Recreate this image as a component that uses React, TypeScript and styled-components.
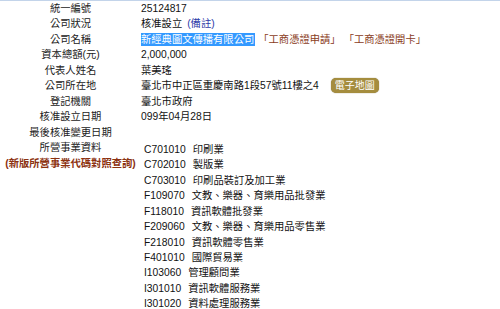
import React from "react";
import styled, { createGlobalStyle } from "styled-components";

const business = [
  ["C701010", "印刷業"],
  ["C702010", "製版業"],
  ["C703010", "印刷品裝訂及加工業"],
  ["F109070", "文教、樂器、育樂用品批發業"],
  ["F118010", "資訊軟體批發業"],
  ["F209060", "文教、樂器、育樂用品零售業"],
  ["F218010", "資訊軟體零售業"],
  ["F401010", "國際貿易業"],
  ["I103060", "管理顧問業"],
  ["I301010", "資訊軟體服務業"],
  ["I301020", "資料處理服務業"],
];

const App = () => {
  return (
    <>
      <GlobalStyle />
      <Page>
        <Row>
          <Label>統一編號</Label>
          <Value>25124817</Value>
        </Row>
        <Row>
          <Label>公司狀況</Label>
          <Value>
            核准設立 <Note>(備註)</Note>
          </Value>
        </Row>
        <Row>
          <Label>公司名稱</Label>
          <Value>
            <Selected>新經典圖文傳播有限公司</Selected>
            <CertLink>「工商憑證申請」</CertLink>
            <CertLink>「工商憑證開卡」</CertLink>
          </Value>
        </Row>
        <Row>
          <Label>資本總額(元)</Label>
          <Value>2,000,000</Value>
        </Row>
        <Row>
          <Label>代表人姓名</Label>
          <Value>葉美瑤</Value>
        </Row>
        <Row>
          <Label>公司所在地</Label>
          <Value>
            臺北市中正區重慶南路1段57號11樓之4
            <MapButton>電子地圖</MapButton>
          </Value>
        </Row>
        <Row>
          <Label>登記機關</Label>
          <Value>臺北市政府</Value>
        </Row>
        <Row>
          <Label>核准設立日期</Label>
          <Value>099年04月28日</Value>
        </Row>
        <Row>
          <Label>最後核准變更日期</Label>
          <Value />
        </Row>
        <Row>
          <Label>
            所營事業資料
            <br />
            <LookupLink>(新版所營事業代碼對照查詢)</LookupLink>
          </Label>
          <BusinessList>
            {business.map(([code, name]) => (
              <BusinessItem key={code}>
                <Code>{code}</Code>
                {name}
              </BusinessItem>
            ))}
          </BusinessList>
        </Row>
      </Page>
    </>
  );
};

/**
 * styles
 */

const GlobalStyle = createGlobalStyle`
  body {
    margin: 0;
    background: #fff;
    font-family: "Liberation Sans", "Noto Sans CJK TC", Arial, sans-serif;
    font-size: 10.3px;
    color: #111;
  }
`;

const Page = styled.div`
  width: 500px;
  height: 309px;
  overflow: hidden;
  border-top: 1px solid #c3d4ea;
`;

const Row = styled.div`
  display: grid;
  grid-template-columns: 141px 1fr;
  align-items: start;
`;

const Label = styled.div`
  text-align: center;
  line-height: 15.45px;
  color: #222;
  white-space: nowrap;
`;

const Value = styled.div`
  display: flex;
  align-items: center;
  height: 15.45px;
  line-height: 15.45px;
  white-space: nowrap;
`;

const Note = styled.span`
  color: #2c3aa8;
  margin-left: 5px;
`;

const Selected = styled.span`
  background: #3399ff;
  color: #fff;
  padding: 0 1px 0 0;
  line-height: 13px;
`;

const CertLink = styled.span`
  color: #8a3c1c;
  margin-left: 3px;
`;

const MapButton = styled.span`
  display: inline-block;
  margin-left: 12px;
  padding: 0 4px;
  height: 15px;
  line-height: 15px;
  border-radius: 5px;
  background: #a58d3e;
  color: #fff;
  font-size: 10px;
  box-shadow: 0 0 1px #6e5c24;
`;

const LookupLink = styled.span`
  color: #8c3210;
  font-weight: bold;
`;

const BusinessList = styled.div`
  padding: 2px 0 0 3px;
`;

const BusinessItem = styled.div`
  line-height: 15.4px;
  white-space: nowrap;
`;

const Code = styled.span`
  display: inline-block;
  margin-right: 7px;
`;

export default App;
